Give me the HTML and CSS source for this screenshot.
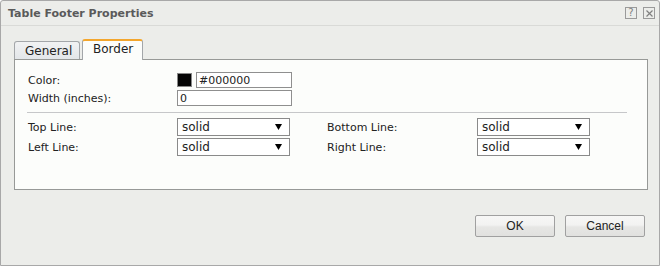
FILE: index.html
```html
<!DOCTYPE html>
<html lang="en">
<head>
    <meta charset="UTF-8">
    <title>Table Footer Properties</title>
    <link rel="stylesheet" href="styles.css">
</head>
<body>
    <div class="dialog">
        <div class="titlebar">
            <span class="title">Table Footer Properties</span>
            <div class="tools">
                <span class="tool">?</span>
                <span class="tool">
                    <svg width="7" height="7" viewBox="0 0 7 7"><path d="M0.5 0.5 L6.5 6.5 M6.5 0.5 L0.5 6.5" stroke="#808080" stroke-width="1.2" fill="none"/></svg>
                </span>
            </div>
        </div>

        <div class="content">
            <div class="tabs">
                <div class="tab">General</div>
                <div class="tab active">Border</div>
            </div>

            <div class="panel">
                <div class="row">
                    <label class="label">Color:</label>
                    <span class="swatch"></span>
                    <input type="text" class="field color-field" value="#000000">
                </div>
                <div class="row">
                    <label class="label">Width (inches):</label>
                    <input type="text" class="field width-field" value="0">
                </div>

                <div class="separator"></div>

                <div class="lines">
                    <label class="label">Top Line:</label>
                    <div class="select"><span>solid</span><svg width="7" height="6" viewBox="0 0 7 6"><path d="M0 0 H7 L3.5 6 Z" fill="#000"/></svg></div>
                    <label class="label">Bottom Line:</label>
                    <div class="select"><span>solid</span><svg width="7" height="6" viewBox="0 0 7 6"><path d="M0 0 H7 L3.5 6 Z" fill="#000"/></svg></div>

                    <label class="label">Left Line:</label>
                    <div class="select"><span>solid</span><svg width="7" height="6" viewBox="0 0 7 6"><path d="M0 0 H7 L3.5 6 Z" fill="#000"/></svg></div>
                    <label class="label">Right Line:</label>
                    <div class="select"><span>solid</span><svg width="7" height="6" viewBox="0 0 7 6"><path d="M0 0 H7 L3.5 6 Z" fill="#000"/></svg></div>
                </div>
            </div>

            <div class="buttons">
                <button class="btn">OK</button>
                <button class="btn">Cancel</button>
            </div>
        </div>
    </div>
</body>
</html>
```

FILE: styles.css
```css
body {
    margin: 0;
    padding: 0;
    background-color: #ffffff;
    font-family: "DejaVu Sans", Verdana, sans-serif;
    font-size: 11px;
    color: #222;
}

.dialog {
    width: 658px;
    height: 264px;
    background-color: #ecedea;
    border: 1px solid #a8a8a8;
    border-radius: 3px 3px 0 0;
}

.titlebar {
    height: 24px;
    border-bottom: 1px solid #d9dad7;
    display: flex;
    align-items: center;
    justify-content: space-between;
    padding: 0 4px 0 7px;
}

.title {
    font-weight: bold;
    font-size: 11px;
    color: #5a5a5a;
}

.tools {
    display: flex;
    gap: 6px;
}

.tool {
    width: 10px;
    height: 10px;
    border: 1px solid #9a9a9a;
    display: flex;
    align-items: center;
    justify-content: center;
    font-size: 10px;
    line-height: 10px;
    color: #808080;
}

.content {
    padding: 12px 0 0 13px;
}

.tabs {
    display: flex;
    align-items: flex-end;
    height: 21px;
    gap: 2px;
}

.tab {
    height: 17px;
    padding: 0 10px;
    border: 1px solid #a3a6a9;
    border-bottom: none;
    border-radius: 3px 3px 0 0;
    background: linear-gradient(#f1f2f3, #e3e6e9);
    font-size: 12px;
    line-height: 19px;
    color: #222;
    width: 44px;
    text-align: center;
}

.tab.active {
    height: 19px;
    background: #fcfdfb;
    border-top: 2px solid #f3a62d;
    line-height: 16px;
    width: 39px;
    margin-bottom: -1px;
    position: relative;
}

.panel {
    width: 632px;
    height: 129px;
    background-color: #fcfdfb;
    border: 1px solid #979997;
    padding: 0;
}

.row {
    display: flex;
    align-items: center;
    height: 16px;
    padding-left: 13px;
    margin-top: 2px;
}

.row:first-child {
    margin-top: 12px;
}

.label {
    width: 149px;
    flex-shrink: 0;
}

.swatch {
    width: 15px;
    height: 14px;
    background: #050505;
    border: 1px solid #888;
    margin-right: 4px;
    box-sizing: border-box;
}

.field {
    height: 16px;
    border: 1px solid #8f8f8f;
    box-sizing: border-box;
    padding: 0 2px;
    font-family: "DejaVu Sans", Verdana, sans-serif;
    font-size: 11px;
    color: #222;
    background: #fff;
    outline: none;
}

.color-field {
    width: 96px;
}

.width-field {
    width: 115px;
}

.separator {
    height: 1px;
    background-color: #c6c7c9;
    width: 600px;
    margin: 6px 0 0 12px;
}

.lines {
    display: grid;
    grid-template-columns: 149px 150px 150px 113px;
    grid-auto-rows: 18px;
    row-gap: 2px;
    align-items: center;
    padding-left: 13px;
    margin-top: 5px;
}

.select {
    width: 113px;
    height: 18px;
    box-sizing: border-box;
    border: 1px solid #8a8a8a;
    background: #fff;
    display: flex;
    align-items: center;
    justify-content: space-between;
    padding: 0 7px 0 4px;
    font-size: 12px;
}

.buttons {
    display: flex;
    justify-content: flex-end;
    gap: 10px;
    padding: 25px 14px 0 0;
}

.btn {
    width: 80px;
    height: 22px;
    border: 1px solid #a0a0a0;
    border-radius: 2px;
    background: linear-gradient(#f7f7f6 0%, #f2f2f1 45%, #e6e6e4 55%, #e1e1df 100%);
    font-family: "Liberation Sans", Arial, sans-serif;
    font-size: 12px;
    color: #222;
    padding: 0;
}
```
